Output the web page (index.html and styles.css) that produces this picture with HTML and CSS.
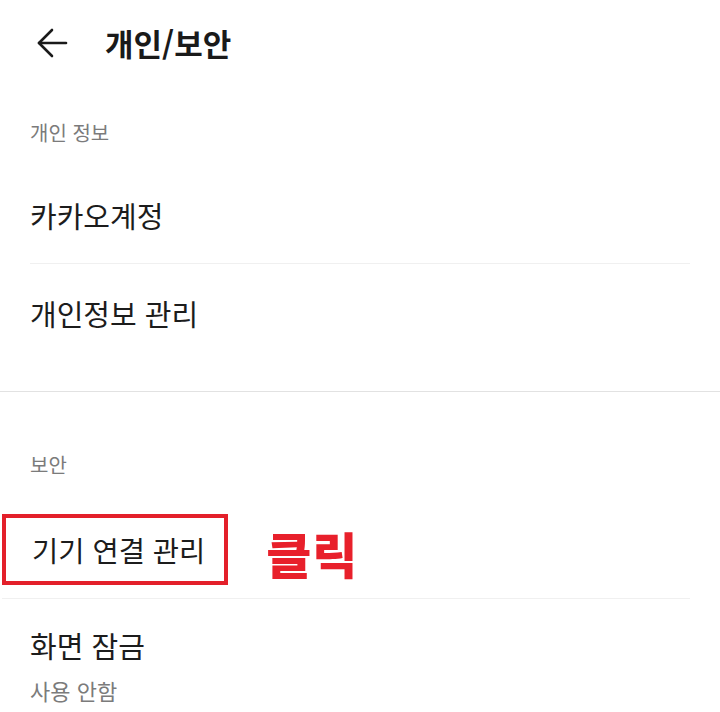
FILE: index.html
```html
<!DOCTYPE html>
<html lang="ko">
<head>
<meta charset="utf-8">
<title>개인/보안</title>
<link rel="stylesheet" href="styles.css">
</head>
<body>
<div class="screen">
  <header class="appbar">
    <button class="back" aria-label="뒤로">
      <svg width="34" height="34" viewBox="0 0 34 34" fill="none" stroke="#1a1a1a" stroke-width="2.6" stroke-linecap="round" stroke-linejoin="round">
        <path d="M31 17H4"/>
        <path d="M17 4L4 17L17 30"/>
      </svg>
    </button>
    <h1 class="title">개인/보안</h1>
  </header>

  <section class="group group-first">
    <div class="group-label">개인 정보</div>
    <div class="item"><span class="item-title">카카오계정</span></div>
    <div class="item item-last"><span class="item-title">개인정보 관리</span></div>
  </section>

  <section class="group group-second">
    <div class="group-label">보안</div>
    <div class="item item-marked">
      <span class="mark-box"><span class="item-title">기기 연결 관리</span></span>
      <span class="mark-note">클릭</span>
    </div>
    <div class="item item-sub">
      <span class="item-title">화면 잠금</span>
      <span class="item-desc">사용 안함</span>
    </div>
  </section>
</div>
</body>
</html>
```

FILE: styles.css
```css
* { box-sizing: border-box; }
html, body { margin: 0; padding: 0; background: #fff; }
body {
  font-family: "Noto Sans CJK KR", "Noto Sans", sans-serif;
  color: #1c1c1c;
  width: 720px;
  height: 712px;
  overflow: hidden;
}
.screen { width: 720px; }

.appbar {
  height: 86px;
  display: flex;
  align-items: center;
  padding-left: 35px;
}
.back {
  border: 0;
  background: none;
  padding: 0;
  width: 34px;
  height: 34px;
  display: flex;
  margin-right: 36px;
}
.title {
  margin: 0;
  font-size: 31px;
  font-weight: 700;
  line-height: 40px;
  color: #1a1a1a;
}

.group-label {
  padding: 0 30px;
  font-size: 20px;
  line-height: 28px;
  color: #7b7b7b;
}
.group-first .group-label { padding-top: 33px; padding-bottom: 19px; }
.group-first { border-bottom: 1px solid #e2e2e2; padding-bottom: 29px; }
.group-second .group-label { padding-top: 59px; padding-bottom: 22px; }

.item {
  margin: 0 30px;
  height: 98px;
  display: flex;
  align-items: center;
  border-bottom: 1px solid #f0f0f0;
}
.item-last { border-bottom: 0; }
.item-title {
  font-size: 29px;
  line-height: 40px;
  color: #1c1c1c;
}

.item-marked {
  margin-left: 2px;
}
.mark-box {
  display: flex;
  align-items: center;
  height: 71px;
  border: 4px solid #e3202a;
  padding: 0 19px 0 26px;
}
.mark-box .item-title { font-size: 28.5px; }
.mark-note {
  margin-left: 38px;
  font-size: 49px;
  font-weight: 900;
  line-height: 60px;
  color: #e8202b;
  letter-spacing: 1px;
  padding-top: 6px;
}

.item-sub {
  flex-direction: column;
  align-items: flex-start;
  justify-content: flex-start;
  border-bottom: 0;
  padding-top: 26px;
  height: 113px;
}
.item-desc {
  font-size: 22px;
  line-height: 30px;
  color: #7b7b7b;
  margin-top: 10px;
}
```
